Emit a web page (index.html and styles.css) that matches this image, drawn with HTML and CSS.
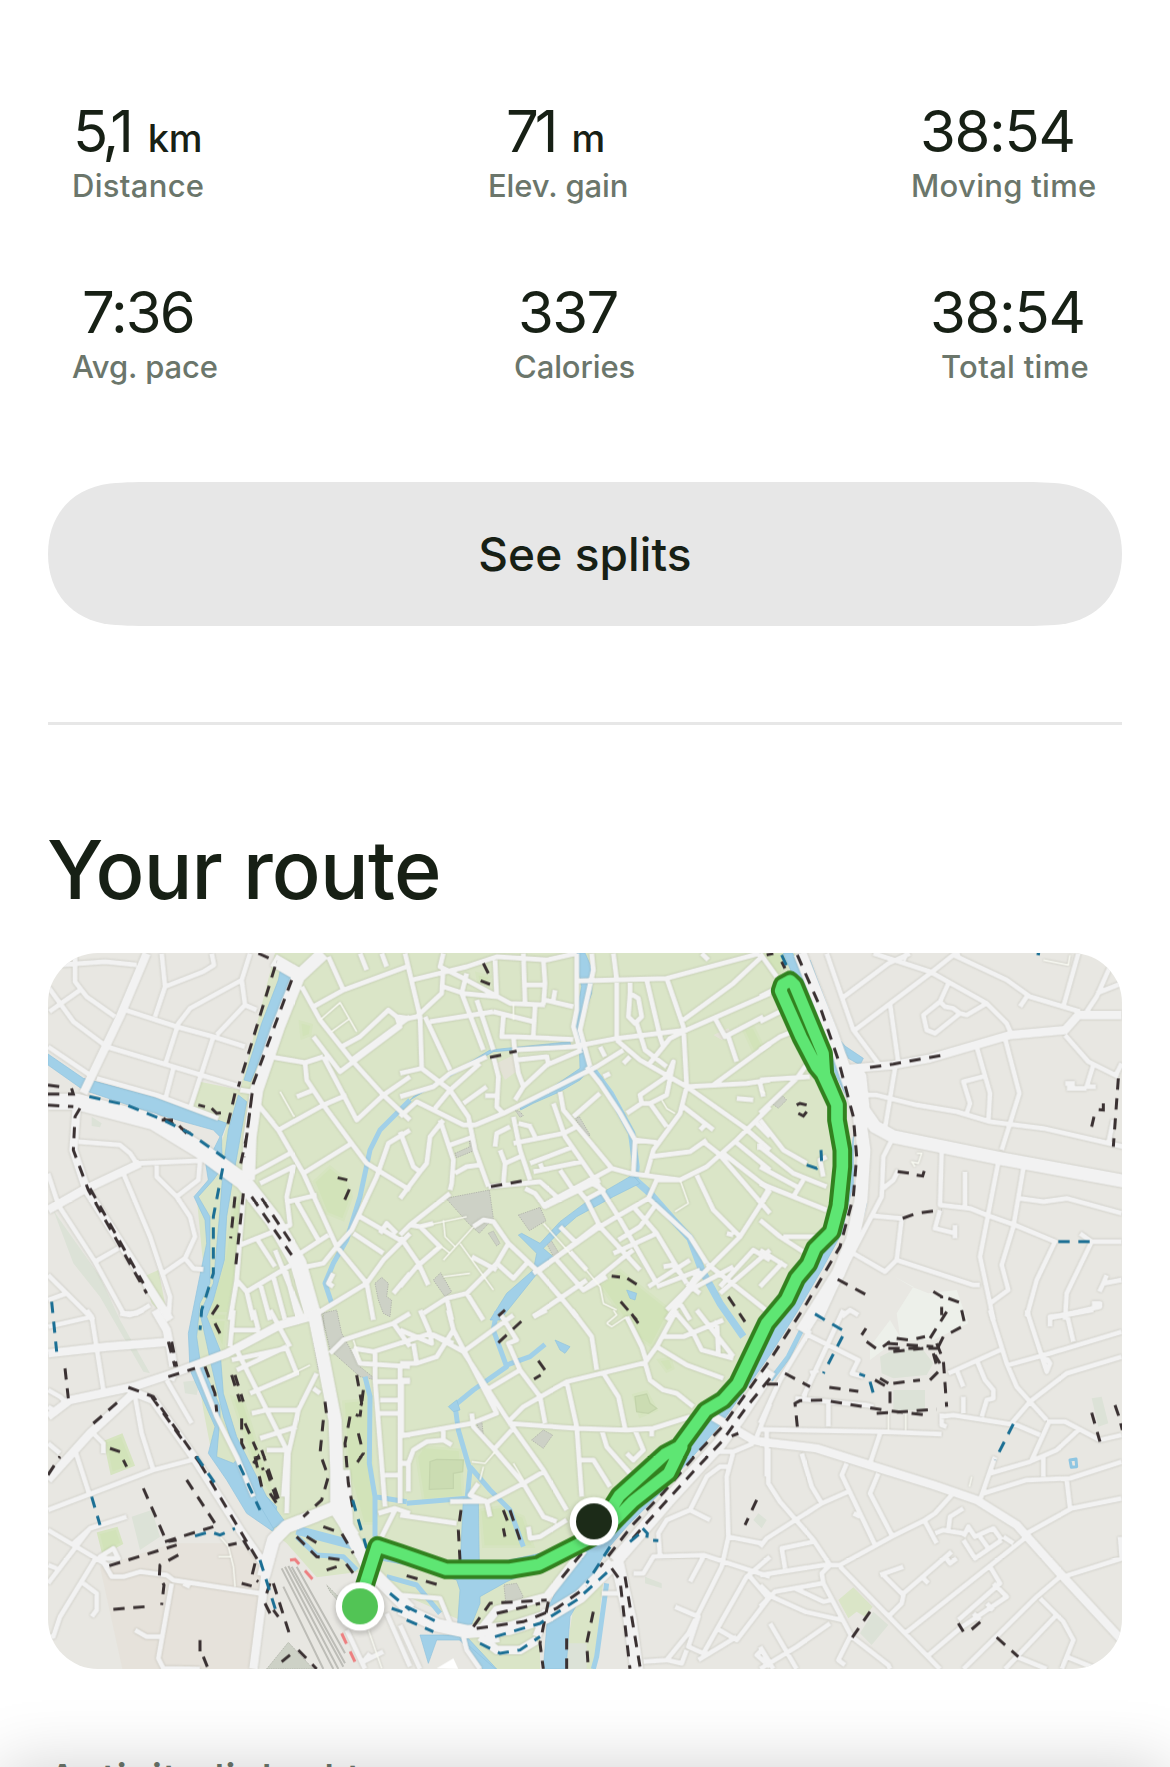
FILE: index.html
```html
<!DOCTYPE html>
<html lang="en">
<head>
<meta charset="utf-8">
<title>Activity</title>
<link rel="stylesheet" href="styles.css">
</head>
<body>
<main class="page">
  <section class="stats">
    <div class="stats-row first">
      <div class="stat"><div class="value distance">5,1<span class="unit">km</span></div><div class="label wide">Distance</div></div>
      <div class="stat"><div class="value gain">71<span class="unit">m</span></div><div class="label">Elev. gain</div></div>
      <div class="stat"><div class="value moving">38:54</div><div class="label wide">Moving time</div></div>
    </div>
    <div class="stats-row second">
      <div class="stat"><div class="value pace">7:36</div><div class="label">Avg. pace</div></div>
      <div class="stat"><div class="value calories">337</div><div class="label">Calories</div></div>
      <div class="stat"><div class="value total">38:54</div><div class="label wide">Total time</div></div>
    </div>
  </section>
  <button class="splits" type="button">See splits</button>
  <hr class="divider">
  <h1 class="title">Your route</h1>
  <svg class="map" viewBox="24 9 3222 2148" preserveAspectRatio="none">
    <!-- land -->
    <rect class="land" x="0" y="0" width="3300" height="2200"/>
    <path class="town" d="M705 9H2265L2410 450 2440 600 2390 850 2190 1190 2020 1380 1700 1800 1510 1940 1260 2010 1080 1930 1000 1860 830 1882 740 1780 690 1740 600 1640 515 1510 490 1380 470 1250 455 1110 490 950 470 740 510 680 560 530 450 480 480 395 600 420Z"/>
    <path class="town" d="M1320 1970L1500 1940 1500 2170H1370L1260 2050ZM1600 1970L1690 1890 1660 2170H1570ZM310 980L355 960 385 1110 335 1060ZM2395 1950L2440 1912 2498 1970 2475 2000 2450 1985 2425 2005Z"/>
    <path class="built" d="M180 1850L400 1780 560 1780 665 1800 665 1910 640 2170H250Z"/>
    <path class="park" d="M780 215L815 225 810 255 785 265ZM822 695L870 650 920 690 935 740 910 810 860 790ZM580 770L600 740 600 900 560 1110 500 1110 550 940ZM195 1475L245 1455 280 1545 215 1570ZM175 1750L230 1735 245 1780 190 1810ZM910 1355L960 1350 980 1290 1000 1600 1010 1720 970 1720 925 1560ZM500 1090L560 1090 550 1200ZM575 1340L610 1350 700 1640 640 1540Z"/>
    <path class="park" d="M1680 1005L1740 960 1840 1040 1890 1080 1835 1190 1790 1160ZM1130 1520L1150 1490 1260 1500 1270 1640 1150 1650ZM1320 1680L1380 1670 1450 1700 1480 1790 1330 1790ZM1780 1335L1820 1325 1850 1380 1800 1400ZM1855 1230L1890 1225 1900 1255 1880 1265ZM2110 240L2140 230 2170 290 2140 305ZM2160 10H2230L2225 90 2200 60ZM1310 70L1350 80 1340 105 1315 95Z"/>
    <path class="lawn" d="M1170 1535L1190 1528 1270 1530 1268 1565 1240 1570 1240 1615 1168 1618ZM1785 1340L1820 1332 1830 1360 1850 1375 1825 1390 1790 1385Z"/>
    <path class="pitch" d="M40 780L60 810 180 980 240 1110 330 1270 310 1265 180 1040 100 940ZM155 500L185 520 180 532 155 528ZM275 1700L335 1680 360 1760 300 1800ZM430 1295L480 1290 470 1335 435 1330ZM2560 1320L2655 1320 2655 1380 2560 1380ZM2520 1220L2560 1200 2650 1200 2680 1240 2660 1275 2560 1285 2525 1270ZM3155 1345L3185 1340 3205 1420 3175 1430ZM2460 2050L2500 1985 2545 2025 2495 2085ZM1815 1880L1865 1900 1865 1915 1815 1900ZM2140 1710L2155 1690 2180 1710 2165 1735ZM1580 2080L1640 2080 1640 2160 1575 2160Z"/>
    <path class="pale" d="M2560 978L2615 1010 2665 1030 2750 1020 2785 1120 2680 1170 2570 1170 2490 1230 2490 1190 2550 1110 2580 1160 2570 1090 2620 1010Z"/>
    <path class="plaza" d="M1218 745L1348 720 1360 805 1318 850 1285 820ZM1435 795L1500 772 1518 812 1468 842ZM1345 850L1360 843 1380 880 1370 888ZM1180 990L1202 968 1235 1025 1215 1040ZM1605 505L1618 500 1650 555 1640 562ZM1245 610L1290 590 1288 570 1302 572 1302 602 1250 623ZM1475 1470L1510 1440 1538 1455 1510 1495ZM1005 1000L1025 982 1045 1000 1040 1040 1055 1050 1050 1100 1030 1090 1015 1050ZM810 1110L835 1260 860 1275 850 1090ZM845 1090L890 1080 905 1150 960 1250 1010 1290 960 1280 870 1200ZM2195 460L2225 435 2240 450 2215 475ZM680 2157L745 2077 820 2157ZM1392 1905L1430 1900 1450 1940 1400 1985ZM1425 480L1440 485 1450 497 1440 502ZM1520 880L1535 873 1560 915 1540 920ZM860 1905L900 1945 900 1960 870 1925ZM1310 1420L1325 1410 1330 1455 1320 1450Z"/>
    <path class="tracks" d="M725 1855L880 2157M735 1850L895 2157M745 1848L910 2150M755 1850L915 2140M730 1910L850 2157M770 1850L915 2110"/>
    <path class="built" d="M1370 340L1420 315 1428 365 1395 390ZM2020 255L2065 235 2078 255 2045 270Z"/>

    <!-- water -->
    <g class="water">
      <path d="M722 55L745 42 765 65 745 130 705 220 632 395 612 390 665 220 715 90Z"/>
      <path d="M24 312L130 385 340 440 560 520 545 560 545 590 548 650 520 690 475 740 510 800 510 850 510 1000 480 1060 470 1160 480 1230 540 1370 540 1400 530 1520 580 1540 590 1530 640 1600 710 1670 700 1745 620 1690 560 1590 505 1510 525 1430 450 1260 445 1150 475 1000 500 880 495 810 462 740 505 690 497 640 520 600 540 560 520 540 340 490 130 420 24 345Z"/>
      <path d="M595 435L620 455 585 650 560 800 553 930 520 1050 500 1100 540 1200 550 1330 590 1460 640 1560 680 1640 735 1715 700 1735 650 1650 590 1520 550 1400 515 1250 500 1180 480 1090 520 1000 540 780 550 650 565 540Z"/>
      <path d="M1605 9L1635 9 1658 60 1655 130 1620 230 1640 330 1655 350 1620 390 1560 425 1480 460 1442 480 1440 465 1540 410 1620 355 1618 290 1600 230 1625 110 1612 50Z"/>
      <path d="M1085 480L1120 440 1350 300 1590 275 1592 288 1360 305 1210 390 1110 450Z"/>
      <path d="M1110 450L1020 540 990 600 960 740 920 870 880 940 855 1000 875 1060" class="canal thin"/>
      <path d="M1658 360L1710 430 1775 550 1788 650 1785 690 1830 730 1900 810 1950 865 1985 960 2040 1060 2110 1160" class="canal mid"/>
      <path d="M1778 675L1800 700 1720 740 1610 800 1570 835 1510 895 1545 925 1500 960 1460 1010 1380 1110 1350 1110 1400 1030 1480 960 1490 910 1435 855 1445 850 1500 880 1560 815 1640 755Z"/>
      <path d="M1370 1085L1360 1140 1400 1250 1300 1320 1245 1365 1255 1440 1290 1560 1280 1660M1290 1550L1350 1620 1410 1680 1450 1790M1400 1245L1470 1220 1515 1183M1100 1660L1280 1645" class="canal thin"/>
      <path d="M1545 1170L1590 1190 1575 1210 1560 1200ZM1225 1370L1250 1350 1260 1380 1240 1385Z"/>
      <path d="M1270 1645H1315L1318 1850 1500 1810 1640 1780 1760 1640 2000 1380 2070 1300 2150 1170 2240 1040 2380 840 2420 690 2440 560 2440 700 2405 850 2345 960 2275 1080 2190 1215 2130 1300 2040 1425 1980 1495 1870 1620 1760 1730 1700 1800 1630 1930 1590 2000 1578 2157H1510L1525 1970 1570 1880 1640 1790 1400 1895 1320 1940 1320 1960 1280 2060 1370 2157H1340L1250 2060 1260 1920 1250 1890 1130 1850 1020 1830 1040 1800 1260 1860Z"/>
      <path d="M2230 9H2258L2395 330 2425 450 2390 380Z"/>
      <path d="M2310 30L2400 270 2415 288 2470 325 2460 345 2425 325 2400 280Z"/>
      <path d="M2300 1110L2245 1220 2192 1290" class="canal thin"/>
      <path d="M975 1280L990 1340 988 1540 1005 1640 1100 1655M1005 1640V1760" class="canal thin"/>
      <path d="M770 1740L960 1790" class="canal"/>
      <path d="M770 1760L830 1815 910 1820 950 1860M1040 1880L1130 1905 1200 1990M1700 1900L1670 2120 1660 2157" class="canal thin"/>
      <path d="M1140 2055H1250L1290 2090 1370 2160H1330L1265 2070 1190 2070 1165 2140Z"/>
      <path d="M2460 765L2480 760 2470 800 2460 795ZM1760 1020L1790 1030 1785 1050 1770 1045Z"/>
      <path class="pond" d="M3090 1530L3108 1527 3110 1550 3094 1552Z"/>
    </g>

    <!-- streets -->
    <g class="streets">
      <g>
        <path class="street" d="M60 45L195 35 290 45M105 10V95L140 140 225 200M28 185L120 120M24 110L100 215 200 290M365 10L375 110 345 200M375 110L490 65 522 45 515 10M630 10L605 90 615 165 530 255M605 90L450 175 415 220 375 345M240 175L410 230 520 260 615 290M200 290L400 350 600 410M520 260L450 475M400 355L375 450M170 385L350 435 535 505M24 290L150 375M615 165L650 180M600 420L635 425"/>
        <path class="street" d="M115 575L240 585 270 610 290 640 480 632 475 690 410 740M350 640V680L410 740 450 800 465 860 435 925 370 970M250 670L330 860 390 1040 385 1110M435 925L460 955 490 958M55 765L165 935 250 1090 290 1090 330 1065M165 935L235 895M24 670L55 765M24 975L80 1030 160 1110M24 1050L80 1030"/>
        <path class="street" d="M690 320L795 338 850 320M795 338L800 390 850 465 935 580 980 640 1110 720M820 260L900 365 1080 230 1070 200 1045 180 960 260 905 290M785 110L840 210 935 330 1030 435 1110 510M820 170L910 120 1100 50M865 20L910 120M960 10L980 60M1025 10L1040 50M1070 200L1110 205M935 330L1110 200M770 440L820 420M655 465L715 540 850 465 920 435M715 540L790 670 890 890 980 1000 1000 1110M935 580L790 670M850 320L950 510 1030 435 1110 380M640 670L750 610M660 700L760 650 740 740 750 825 600 885M745 755L830 735M770 755L835 870M600 885L650 865 705 950M655 465L700 520M765 920L865 855M800 950L850 940 890 890M590 990L620 1025 770 935M620 1025L640 1110M660 1000L690 1110M700 980L735 1110M735 955L775 1110M705 900L790 1110M840 1085L980 1000 1030 930 1110 850M890 890L935 840 1010 680 1045 580 1110 540M940 850L1030 910M960 800L1080 870M1060 1030L1110 970M610 740L590 990 570 1110M880 970L865 1000 880 1010M1020 850L1040 820 1070 850"/>
        <path class="lane" d="M840 210L900 158 950 245M875 245L930 205M720 425L762 500"/>
        <path class="avenue" d="M320 10L240 200 130 430M24 780L130 720 300 640M110 470L100 600 140 720M140 720L300 970 390 1110"/>
        <path class="boulevard wide" d="M24 455L110 455 340 515 480 600 610 695 700 810 775 940 820 1100"/>
        <path class="boulevard" d="M850 10L775 80 715 230 650 420 630 560 625 690M700 30L770 70"/>
      </g>
      <g transform="translate(1080 0)">
        <path class="street" d="M15 10L60 200 65 355 150 420 205 500 225 600 265 710M0 210L50 200 125 130 130 50M35 90L200 50 290 20 440 30 530 10M130 10L120 50 200 90 330 160 435 165M285 30L290 140 190 130 130 110M200 70L185 130 250 300M230 150L280 300M370 10L375 160M430 30L435 100 430 165M375 105H435M435 150L520 170M465 120L460 150M75 200L150 360M90 215L280 185M280 185L400 215M310 200L305 260 340 260 520 268M405 170L400 255M340 260L345 310M345 300L520 290 650 265 860 240 1110 130M280 320L295 380 290 470 310 490M345 310L355 370 370 410 345 450M350 330L440 320 445 340M370 410L440 345 545 300M0 370L65 355M0 440L100 410 150 370 260 320M105 475L150 420M190 460L260 410M150 420L240 340M255 437H290M0 500L50 455 130 495 190 525 225 525 310 490 590 350 670 300M130 510L90 560 80 640 60 665 0 745M120 510L160 630 155 700 150 720M0 545L40 650 60 665M150 585L220 560M165 670L200 650 240 645M340 500L360 600 390 690M330 530L290 550 285 590M340 580L490 550 530 530M390 530L405 560M355 520L395 530M300 600L315 640 310 700M315 640L360 620"/>
        <path class="street" d="M535 93L800 85 1080 10M530 10L530 180 520 230 540 300M575 10L580 60 540 240 570 350M640 10L650 90V270M690 90V130L685 200 705 220 725 200 715 145 690 130M740 90L780 260 790 290M800 85L850 230 860 410 840 490 760 600 740 670M850 210L1000 100 1085 20M905 10L925 30M710 220L735 300 800 350M650 270L720 330 860 410 1040 400 1110 390M745 345L810 265 860 240M600 290L615 320M670 340L690 320M610 380L630 370M560 350L600 400 660 490 705 570 770 577M600 430L520 500M480 425L490 480 540 540 635 655 690 670M460 460L495 560 585 690 655 800 770 1000M690 670L840 690 920 650 1010 570 1110 470M705 570L700 670M635 655L440 760 425 770M530 715L560 750 600 830 720 960M390 640L520 590M400 665L545 635M420 640L430 665M480 660L520 720M725 460L680 490M725 460L720 435 800 380 820 335 805 410 800 435 750 460 725 460M750 460L800 530M850 470L940 540M900 540L915 525M860 410L1030 530 1110 600M940 405L1110 280M945 205L975 260 1090 200M985 260L1010 335M910 575L955 610 1110 790M750 620L870 605 920 570M890 675L940 780 1020 860 960 920 800 1080M1020 860L1110 720M1000 570L1110 660M970 610L1110 720M840 690L770 690 745 745 650 800 600 830 400 970M745 745L870 860 920 940M770 760L720 830 655 870M700 770L770 850 860 1000M1060 510L1110 560M1080 400L1090 440M1010 445L1060 450M980 850L1000 855M1110 930L1060 900 960 1010"/>
        <path class="street" d="M370 700L420 695 470 740M375 715L405 730 435 770 600 690M265 710L370 700M0 855L30 825 150 730M30 825L60 830 120 890 50 950 0 1010M60 830L100 820M0 860L55 940 85 1005M220 830L250 810 280 815 325 880 420 970 480 1040 530 1100M325 880L290 940 240 990 200 1030 140 1045 70 1090M290 940L340 985 380 940M215 920L290 960M200 1030L250 1110M140 1045L155 1110M420 960L600 820M470 930L550 1020 660 930 700 900M510 905L560 960M400 1100L560 990M550 1020L620 980M790 950L820 945 840 970M640 910L770 850M770 1010L900 960M745 1010L870 930M860 1000L900 1030M920 940L1110 1090M1110 900L960 1030M900 960L800 1110M840 1060L870 1110M560 690L610 720 555 750M480 830L530 880M820 1080L870 1020 1000 950"/>
        <path class="lane" d="M130 930L220 830M60 830L200 800M130 810L135 860 165 890M180 880L280 1020M430 820L510 910M130 980L210 970M550 950L600 1010 610 1060 650 1080M840 690L865 760 825 785M340 160V210M785 450L800 475 825 490M100 900L125 890 150 910"/>
      </g>
      <g transform="translate(2160 0)">
        <path class="street" d="M200 10L245 140 280 240 355 340M245 145L385 40 450 10M285 240L510 70 580 15 740 90 810 140 960 185M340 10L510 65 680 160 740 220 755 255M430 30L440 10M580 15L600 10M565 100L540 155 490 195 500 240 525 250 600 190 580 175 555 170 540 155M600 190L620 195 680 160M390 160L415 340M405 355L375 535M305 435H350L470 465 590 485 690 515 850 535 1090 590M650 290L690 430 685 515M675 378L610 395 630 460 620 490M735 265L778 430 725 600M780 170L800 140M915 255L985 335 1075 380M1000 345L980 410H1008M915 400H945M920 415H980M1085 340L1070 370M955 10L910 170M1050 50L1010 140 980 185M1010 130L1085 100M1060 510L1045 580M395 570L370 620 365 740 240 980 180 1110M370 715L400 690 415 660M545 600L540 765 630 775 680 795 765 825 885 875 830 990 800 1100M615 665V775M715 635L660 920 690 1060 700 1110M335 797L425 805 410 930 375 965 280 910M540 780L525 835 585 850M585 825V865M410 930L640 1005H660M790 655L760 830 725 945 745 1020 690 1060M780 745L850 755 920 745 1085 790M995 875H1085M960 850L995 875 920 1030 915 1110M1085 990L1030 1000 1040 975M1030 1000L1018 1025M865 1105L1020 1070V1060H995M0 390L70 385 150 380M0 490L110 385 150 330M0 140L40 120M0 215L60 185M0 300L60 260 110 240M0 10L50 80M0 510L70 600 140 640M0 590L100 670 200 710M190 680L180 630 200 620M0 650L110 710M0 700L200 780M130 690L100 740M30 710L0 760M0 810L60 860 130 905M70 860H170M0 900L80 950M70 935L0 1010M0 580V600M245 1100L270 1080 295 1095"/>
        <path class="avenue" d="M250 358L400 345 510 325 750 255 915 240 955 195H1085"/>
        <path class="boulevard" d="M120 10L215 250 295 480 312 600 303 750 277 870 235 970 125 1145"/>
        <path class="boulevard" d="M255 360L300 380 310 480 345 530 400 560 720 625 1100 695"/>
        <path class="lane" d="M850 30L925 45 930 15M470 610L485 610 475 640 455 635 465 650M15 430L0 420"/>
      </g>
      <g transform="translate(0 1080)">
        <path class="street" d="M24 50L155 20 140 0M155 20L190 240M240 10L270 15 310 0M24 240L60 260 80 280M24 290L40 300 50 310M150 360L190 400V430M24 400L60 430M285 260L305 370 340 480M24 600L340 480 455 450M105 420L150 560M380 210L455 340M24 660L100 705 210 770M150 655L24 820M260 620L150 655 100 700M24 765L50 775M170 740L60 920 40 980H24M130 820L170 850 170 900 155 920M185 745H235L220 715 180 740 215 800H250L300 785 380 795 400 810 660 850M395 820L355 1045 370 1075 480 1077M285 960L320 980H360M430 820L450 830"/>
        <path class="street" d="M470 170L530 320 590 440 640 560M575 60L660 60M575 150L740 115 770 190 630 250M590 120L740 420 730 560M570 110L580 0M640 0L655 60M690 0L750 110M740 30L800 20M635 310L680 300H775M660 385L770 350M680 420H750M830 190L775 300 745 430 740 610M820 235L840 250M590 180L740 110M870 130L910 90 1060 40 1110 10M940 115L1000 125 1110 90M940 115L960 160 1110 170M1005 215H1110M1005 130V210L1035 590M1080 160V580M1020 270H1080M1020 310H1080M1090 375H1110M1035 495H1080M1085 460H1110M1015 610L1065 595 1110 610M1065 600L1025 680M1060 40L1110 110M990 1030L970 1055 1030 1025M920 960L975 1077M1040 910L1110 1070"/>
        <path class="avenue" d="M24 130L200 110 390 95M345 0L380 60 390 110 400 170M24 320L90 270 280 230 400 190 560 130 720 45 810 20M24 510L150 370 280 250M265 240L340 270 460 440 600 660 670 760M400 190L390 210"/>
        <path class="boulevard" d="M820 0L850 150 885 330 890 480V600M910 480L920 650 990 780 1110 900M890 590L830 615 740 650 700 690 670 800M890 600L940 680"/>
        <path class="avenue" d="M680 760L665 880 640 1077"/>
        <path class="lane" d="M740 200L810 165M540 680L565 710 580 770 585 830M535 740H575M985 960L1025 1075M940 90L960 150"/>
      </g>
      <g transform="translate(1080 1080)">
        <path class="street" d="M0 60L95 100 90 70 60 0M0 100L90 70 190 125 340 15M90 70L160 100M0 160H50L110 140 160 60 145 0M40 100L50 160M0 210H30M5 210V370M0 378L215 340 290 310 160 60M190 125L330 340 430 480 500 600M300 10L350 90 325 100 360 180 420 260 435 340M260 240L360 180M325 335L370 290 500 215 735 158 770 110 830 0M515 0L575 80 590 180M500 215L530 350 545 560M325 340L530 355 680 360 760 355 870 320M610 190L655 260 675 355M335 360L280 420M215 310L220 350 280 415 370 520 430 620 470 635M370 520L430 485M265 575L370 520M0 460H25V545M25 460L40 420 80 395 130 390 155 405M130 360V390M150 575L260 573M0 615L170 640M235 520L210 555 260 575 270 620M385 650L390 685 420 680 500 630M540 450H580L630 530M605 360L620 410 690 490M680 430L700 450 730 420 705 360M755 360V380M735 158L750 210 790 240 830 250 880 290M770 110L860 165 970 205M740 158L725 110 680 20M790 80H850L970 30M880 70L905 120 1000 145M820 0L880 70M950 30L955 130M890 0L1000 140M400 20L440 0M700 790H730L760 740 910 735 1110 800M780 740L775 670 800 630 870 600 930 630M870 600L920 500 960 470H990M1000 425L980 500 985 680 965 770 865 970 800 1050 730 1055M985 680L1085 700M910 740L870 815M825 890L895 920 865 1010 910 1030 1040 800 1110 740M950 955L1010 990 1110 860M1050 800L1110 870M895 1050L1010 980M800 1050L845 1060 860 1020M1110 1060L1085 1020 1070 1035 1110 1070M1110 280L1070 380M1100 360V500M0 855L120 865 155 950M0 945L60 1077M190 980L200 1020 240 1077M605 850H655M950 425H1000L1060 400"/>
        <path class="avenue" d="M550 720L440 860 290 900 250 950M940 320L1060 390 1110 400M440 900L410 980M410 990L360 1020 290 1020 240 980"/>
        <path class="boulevard" d="M0 895L110 945 200 965 330 955 440 920 540 860 640 760"/>
        <path class="boulevard" d="M1110 180L1015 325 960 400 800 575 645 755M650 750L690 930 710 1080M270 950L280 1000"/>
        <path class="lane" d="M340 460L370 510M215 455L255 460 285 425M240 510L250 470M620 40L650 15 640 0M620 40L635 50 680 20"/>
      </g>
      <g transform="translate(2160 1080)">
        <path class="street" d="M250 0L130 260M145 75L295 150 275 190 310 200M150 190L175 180M0 340L60 210 150 60M105 265L205 275 320 285 340 290M205 275V350M0 358L360 365 545 372M360 370L330 460M25 415V520L60 575 160 690 210 765M125 430L155 530 185 580M260 460L245 495 345 705M355 490L330 550 395 675M0 710L20 685 185 580 265 545M210 765H240L395 680 495 630 525 610 575 555M0 795L190 765H210L185 790 190 820 275 980 385 1065 390 1077M75 775L65 715 160 695M0 825L35 860 135 905 245 930M0 890L45 845 185 820M105 835L190 875 215 870M270 980L235 1050 255 1065M30 940L110 1077M0 1010L40 1077M0 1077L110 1010 210 940M240 770L540 1077M360 795L430 770M370 795L430 855 425 880 385 920M425 855L575 725M485 800L505 820M555 740L570 760 590 745M435 970L800 680M500 1040L600 955M595 930L720 820 690 770M600 955L740 860 700 820M680 880L700 900M640 910L660 930M610 1077L830 860 900 800M735 1077L885 920M840 865L910 935 940 990 905 1077M770 1040L860 1077M920 1040L1010 1077M730 680L760 700M610 690L645 745 725 690M610 680L625 650 645 680 700 655 725 690M660 680L685 715M495 635L530 700M525 670L550 660 610 670M565 660L570 620 610 595M910 800L1085 745 1080 680M800 670L935 595 1085 565M930 595L920 510M670 550L800 510 930 505 1085 455M660 570L705 440M690 490L810 455 890 420 955 360M815 450L865 340M850 440V500M860 335H915L1020 390 1085 375M540 320L580 315 770 345 840 375M545 310V345L560 350M750 345L810 275 920 190 1085 140M810 275L860 330M690 0L740 160 770 230 810 275M565 190L720 120M590 180L610 230M610 260V310M650 150L675 210 700 240V265L680 270 665 320M745 165L870 130 1085 65M800 0L860 185 870 160 850 130M870 50V20L920 15 1000 0M920 10L940 95M280 610L300 620"/>
        <path class="avenue" d="M0 395L170 415 360 475 520 525 650 570 770 645 900 790 1090 995"/>
        <path class="lane" d="M385 310V360M437 310V360M635 500L628 530"/>
      </g>
    </g>
    <path class="roof" d="M1190 2155L1240 2125 1255 2157Z"/>

    <!-- footpaths -->
    <g class="paths">
      <path d="M655 10L710 35M705 50L595 410M755 90L640 400 620 560 600 650M585 430L563 525M635 440L612 620M24 432H100L90 400M24 405L60 410M24 465L100 470M120 475L105 500 100 600 145 720 320 1030M150 715L310 1000M475 465L495 470M515 475L530 490 550 488M365 510L400 510 440 550M370 505L450 550M585 740L572 865M610 730L585 968M635 740L755 915M665 745L755 880M893 683L922 690M928 718L905 770M535 1065L515 1095"/>
      <path d="M525 1120L540 1150M385 1175L405 1250M395 1175L410 1250M385 1280L465 1255M75 1255L85 1345M265 1312L340 1340 480 1540M335 1340L435 1480M24 1575L60 1520M160 1420L235 1355M210 1495L240 1505M250 1530L260 1550M480 1540L665 1850M310 1615L380 1775 410 1770M440 1590L525 1720M375 1775L520 1730M208 1847L410 1785M415 1815L360 1845 358 1880 372 1905 365 1965M220 1978L315 1970M480 2070V2105M490 2120L502 2150M495 1250L525 1330 530 1385M575 1275L600 1355M585 1275L610 1355M605 1405L605 1480 615 1500M615 1420L650 1500M665 1500L720 1660M645 1520L665 1610M640 1540L655 1520 670 1560M680 1560L710 1650M690 1630L710 1660M855 1355L860 1395M850 1410L840 1510 865 1580 845 1650 790 1700M770 1760L830 1820 910 1830 940 1870M850 1730L905 1750 940 1810M800 1760L850 1790M860 1860L890 1850M950 1275L965 1360 950 1400M970 1320L960 1400M930 1400L915 1480 925 1600 940 1680M955 1450L970 1510 950 1540M590 1780L565 1785M610 1770L640 1820M645 1840L635 1880 655 1895M605 1900L635 1908M675 1960L690 1990M700 1900L750 2057M775 2100L830 2157M725 2135L750 2115M680 1930L690 1900M700 1980L715 2000"/>
      <path d="M1330 40L1345 70M1322 92L1350 103M1350 322L1385 315M1408 308L1430 303M1353 710L1445 693M1715 978L1740 981M1762 985L1790 1003M1742 1055L1790 1110M1775 1092L1795 1120M1375 1178L1445 1113M2065 1040L2115 1115M1375 1098L1395 1080M1495 1232L1515 1260M1482 1287L1502 1275M1390 1680L1405 1720M1410 1680L1440 1770M1395 1760L1390 1735M1263 1680L1255 1740 1260 1830M1100 1877L1190 1903M1625 1810L1560 1890M1300 2030L1350 1960 1520 1950M1370 1990L1500 1960M1310 2035L1450 2015 1550 1975 1640 1910M1525 1955L1500 2080 1510 2157M1660 1985L1640 2080 1645 2157M1580 2065V2157M1715 1855L1740 1890 1770 2157M1755 1880L1800 2150"/>
      <path d="M2272 15L2340 170 2395 330 2440 500 2450 620 2440 740 2400 890 2300 1060 2190 1230 2045 1432 1980 1500 1870 1628 1780 1722 1680 1850M2190 1285L2120 1370 2045 1475 1960 1565 1850 1685 1770 1775M2180 15L2200 10M2225 35L2235 55M2490 352L2560 342 2710 315M2270 465L2280 460 2300 465M2275 490L2290 498 2300 485M2573 665L2610 670M2630 675L2648 678 2655 655M2588 805L2630 790 2705 780M2393 988L2480 1035M2680 1025L2705 1040 2705 1095M2725 1045L2760 1058 2775 1125 2710 1160 2690 1200M2720 1085L2670 1165M2570 1165L2610 1170 2655 1160M3235 385L3220 590M3190 460V480L3170 478M3162 500L3155 530"/>
      <path d="M2235 1270L2310 1310M2180 1302H2215M2368 1312L2455 1324M2272 1430L2265 1360 2280 1352 2350 1350 2530 1380M2510 1390L2690 1378M2555 1383L2660 1395M2690 1180L2710 1230 2720 1370M2550 1325V1370M2480 1175L2515 1200 2550 1175M2540 1180L2680 1190M2545 1195H2700M2560 1205L2650 1195M2465 1155L2478 1135M2505 1290L2540 1310M2520 1285L2545 1300M2560 1300L2640 1290M2670 1290L2695 1265 2680 1210M2700 1240L2685 1215M3155 1388L3180 1475M3225 1365L3237 1400M3242 1420L3247 1440M2490 1985L2435 2065M2755 2020L2770 2045M2795 2038L2825 2012M2870 2062L2935 2120M2150 1650L2115 1725M2075 1458L2095 1450"/>
    </g>
    <g class="cycle">
      <path d="M148 440L260 465 370 510 450 550 555 625M548 655L520 800V970L485 1080 480 1140M35 1055L50 1205M470 1520L525 1600M598 1545L660 1680M155 1640L180 1725M465 1758L510 1745 540 1755 585 1735M660 1830L710 1990M938 1650L980 1795M1050 1930L1110 1980M1055 1975L1100 1990M1100 1970L1190 2015M1100 2010L1180 2045M1365 2060L1500 2020 1610 1950 1720 1850M1320 2080L1380 2110 1440 2100 1500 2060M1710 1790L1640 1900M1770 1775L1800 1750M1808 1735L1822 1750 1820 1770 1855 1772M2225 15L2250 70M2300 645L2330 655 2345 640 2343 600M3055 875H3155M2325 1092L2415 1145 2350 1270M2458 1272L2475 1278M2490 1295L2500 1330M2920 1422L2865 1530M2990 10L3000 12"/>
    </g>
    <path class="rail" d="M750 1830L765 1828 820 1890M905 2050L955 2157"/>

    <!-- recorded route -->
    <g class="route-edge"><use href="#route"/></g>
    <g class="route-fill"><path id="route" d="M970 1920L1012 1788 1080 1810 1218 1858 1410 1858 1495 1844 1660 1760 1738 1637 1875 1513 1918 1490 1997 1382 2050 1350 2093 1302 2180 1120 2240 1048 2270 984 2305 942 2325 895 2375 845 2395 768 2407 650 2407 600 2391 510 2391 464 2348 372 2330 350 2283 260 2222 122 2228 104 2250 92 2264 105 2349 310 2353 372 2391 464M1700 1735L1738 1696 1778 1655 1825 1618 1886 1570 1925 1490"/></g>
    <circle class="marker-glow" cx="960" cy="1975" r="78"/>
    <circle class="marker-ring" cx="960" cy="1969" r="73"/><circle class="start" cx="960" cy="1969" r="54"/>
    <circle class="marker-glow" cx="1662" cy="1720" r="78"/>
    <circle class="marker-ring" cx="1662" cy="1714" r="73"/><circle class="finish" cx="1662" cy="1714" r="54"/>
  </svg>
  <p class="linked">Activity linked to</p>
</main>
<div class="sheet"></div>
</body>
</html>
```

FILE: styles.css
```css
* { box-sizing: border-box; }
html, body { margin: 0; height: 1767px; overflow: hidden; background: #fff; }
body { font-family: Inter, "Liberation Sans", sans-serif; color: #172015; }
.page { display: flex; flex-direction: column; padding: 96px 48px 0; height: 1767px; overflow: hidden; }
.stats { display: flex; flex-direction: column; gap: 71px; padding-left: 24px; }
.stats-row { display: grid; height: 110px; }
.first { grid-template-columns: 416px 424px 1fr; }
.second { grid-template-columns: 442px 428px 1fr; }
.value { height: 70px; font-size: 58px; line-height: 70px; letter-spacing: -1.3px; white-space: nowrap; }
.unit { font-size: 38px; line-height: 1; font-weight: 500; letter-spacing: -0.2px; margin-left: 18px; }
.distance { padding-left: 1px; letter-spacing: -4.1px; }
.gain { padding-left: 18px; letter-spacing: -4px; }
.gain .unit { margin-left: 17px; }
.moving { padding-left: 8px; }
.pace { padding-left: 10px; letter-spacing: -1.9px; }
.calories { padding-left: 4px; letter-spacing: -1.6px; }
.total { margin-left: -12px; }
.label { font-size: 31px; line-height: 40px; font-weight: 500; letter-spacing: -0.1px; color: #6b766b; white-space: nowrap; }
.label.wide { letter-spacing: 0.3px; margin-left: -1px; }
.first .stat:first-child .label { margin-left: 0; }
.splits { margin: 95px 0 0; height: 144px; flex: none; border: 0; background: #e7e7e7; color: inherit; font: 500 46px/56px Inter, "Liberation Sans", sans-serif; letter-spacing: 0.1px; padding: 0; clip-path: path("M0 72C0 33 24 6 62 1.5C78 0 92 0 110 0H964C982 0 996 0 1012 1.5C1050 6 1074 33 1074 72C1074 111 1050 138 1012 142.5C996 144 982 144 964 144H110C92 144 78 144 62 142.5C24 138 0 111 0 72Z"); }
.divider { width: 100%; height: 3px; flex: none; margin: 96px 0 0; border: 0; background: #e7e7e7; }
.title { margin: 95px 0 0 -1px; font-size: 81px; line-height: 100px; font-weight: 550; letter-spacing: -0.8px; white-space: nowrap; }
.map { display: block; width: 1074px; height: 716px; flex: none; margin-top: 33px; border-radius: 50px; overflow: hidden; }
.linked { margin: 85px 0 0; font-size: 41px; line-height: 50px; font-weight: 500; letter-spacing: 0.7px; color: #6b766b; white-space: nowrap; }
.sheet { position: fixed; left: 0; right: 0; top: 100%; height: 200px; box-shadow: 0 0 64px rgba(0, 0, 0, .18); }

.land { fill: #e8e7e2; }
.town { fill: #dae5c7; }
.built { fill: #e5e1da; opacity: .8; }
.park { fill: #d2e3b9; stroke: #d6e4c0; stroke-width: 8; }
.lawn { fill: #cbdcb2; stroke: #c3d4ab; stroke-width: 4; }
.pitch { fill: #dce2d7; }
.pale { fill: #edf0ea; }
.plaza { fill: #cdd1c6; stroke: #b5b8ae; stroke-width: 3; stroke-dasharray: 4 3; }
.tracks { fill: none; stroke: #bdbdb7; stroke-width: 6; }
.water { fill: #a1d0e8; stroke: #8fc3de; stroke-width: 2; stroke-linejoin: round; }
.canal { fill: none; stroke: #a1d0e8; stroke-width: 28; }
.canal.mid { stroke-width: 22; }
.canal.thin { stroke-width: 15; }
.pond { fill: none; stroke: #8fc6e2; stroke-width: 9; }
.streets { fill: none; stroke: #f2f2f2; stroke-linejoin: round; filter: drop-shadow(0 0 3px rgba(90, 90, 70, .3)); }
.street { stroke-width: 15; }
.avenue { stroke-width: 26; }
.boulevard { stroke-width: 40; }
.boulevard.wide { stroke-width: 50; }
.lane { stroke-width: 5; stroke: #f8f9f2; }
.roof { fill: #fff; }
.paths, .cycle, .rail { fill: none; stroke-width: 9; stroke-dasharray: 34 26; }
.paths { stroke: #3a3132; }
.cycle { stroke: #1b6f94; }
.rail { stroke: #ed7f80; }
.route-edge, .route-fill { fill: none; stroke-linejoin: round; stroke-linecap: round; }
.route-edge { stroke: #32811f; stroke-width: 59; }
.route-fill { stroke: #5ee673; stroke-width: 35; }
.marker-glow { fill: rgba(0, 0, 0, .16); filter: blur(6px); }
.marker-ring { fill: #fff; }
.start { fill: #52c455; }
.finish { fill: #1c2b18; }
```
